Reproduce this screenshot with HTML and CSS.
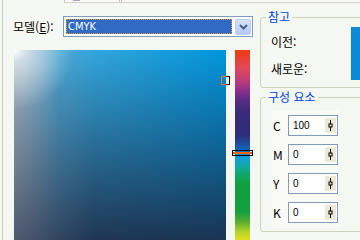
FILE: index.html
```html
<!DOCTYPE html>
<html lang="ko">
<head>
<meta charset="utf-8">
<link rel="stylesheet" href="styles.css">
</head>
<body>
<div class="window">
  <div class="vline"></div>
  <div class="content">
    <div class="tabs">
      <div class="tab tab-a"><span class="tab-mark"></span></div>
      <div class="tab tab-b"></div>
    </div>
    <div class="main">
      <div class="left">
        <div class="model-row">
          <span class="model-label">모델(<u>E</u>):</span>
          <div class="combo">
            <span class="combo-value">CMYK</span>
            <span class="combo-btn">
              <svg width="9" height="6" viewBox="0 0 9 6"><path d="M1 1 L4.5 4.5 L8 1" fill="none" stroke="#4d6185" stroke-width="2"/></svg>
            </span>
          </div>
        </div>
        <div class="picker-row">
          <div class="field"><span class="field-marker"></span></div>
          <div class="hue"><span class="hue-marker"></span></div>
        </div>
      </div>
      <div class="side">
        <fieldset class="group group-ref">
          <legend>참고</legend>
          <div class="ref-body">
            <div class="ref-labels">
              <span class="ref-label first">이전:</span>
              <span class="ref-label second">새로운:</span>
            </div>
            <div class="swatch"></div>
          </div>
        </fieldset>
        <fieldset class="group group-comp">
          <legend>구성 요소</legend>
          <div class="comp-panel">
            <div class="comp-row"><span class="comp-label">C</span><div class="num"><span class="num-val">100</span><span class="spin"><svg width="11" height="15" viewBox="0 0 11 15"><path d="M5.5 2 V13" stroke="#000" stroke-width="1"/><rect x="4" y="6" width="3" height="3" fill="#ece9d8" stroke="#000" stroke-width="1"/></svg></span></div></div>
            <div class="comp-row"><span class="comp-label">M</span><div class="num"><span class="num-val">0</span><span class="spin"><svg width="11" height="15" viewBox="0 0 11 15"><path d="M5.5 2 V13" stroke="#000" stroke-width="1"/><rect x="4" y="6" width="3" height="3" fill="#ece9d8" stroke="#000" stroke-width="1"/></svg></span></div></div>
            <div class="comp-row"><span class="comp-label">Y</span><div class="num"><span class="num-val">0</span><span class="spin"><svg width="11" height="15" viewBox="0 0 11 15"><path d="M5.5 2 V13" stroke="#000" stroke-width="1"/><rect x="4" y="6" width="3" height="3" fill="#ece9d8" stroke="#000" stroke-width="1"/></svg></span></div></div>
            <div class="comp-row"><span class="comp-label">K</span><div class="num"><span class="num-val">0</span><span class="spin"><svg width="11" height="15" viewBox="0 0 11 15"><path d="M5.5 2 V13" stroke="#000" stroke-width="1"/><rect x="4" y="6" width="3" height="3" fill="#ece9d8" stroke="#000" stroke-width="1"/></svg></span></div></div>
          </div>
        </fieldset>
      </div>
    </div>
  </div>
</div>
</body>
</html>
```
FILE: styles.css
```css
html, body {
  margin: 0;
  padding: 0;
  background: #f5f7f2;
}
body {
  width: 360px;
  height: 240px;
  overflow: hidden;
  font-family: "Noto Sans CJK KR", "Noto Sans", sans-serif;
  font-size: 12px;
  color: #000;
}
.window {
  display: flex;
  height: 240px;
  padding-left: 2px;
  overflow: hidden;
}
.vline {
  width: 1px;
  flex-shrink: 0;
  background: #c9c8b8;
}
.content {
  flex: 1;
  display: flex;
  flex-direction: column;
  min-width: 0;
}
.tabs {
  display: flex;
  height: 2px;
  margin-left: 61px;
  border-bottom: 1px solid #d0d0c6;
  flex-shrink: 0;
}
.tab {
  box-sizing: border-box;
  height: 2px;
  border-left: 1px solid #c4c4ba;
}
.tab-a {
  width: 56px;
  border-right: 1px solid #c4c4ba;
  background: #fbfbf8;
  padding-left: 8px;
}
.tab-b {
  flex: 1;
  margin-left: 1px;
  background: #f8f8f4;
}
.tab-mark {
  display: block;
  width: 7px;
  height: 1px;
  background: #a89cc8;
}
.main {
  display: flex;
  flex: 1;
}
.left {
  width: 257px;
  flex-shrink: 0;
  display: flex;
  flex-direction: column;
}
.model-row {
  display: flex;
  align-items: center;
  margin-top: 13px;
  padding-left: 10px;
  height: 21px;
}
.model-label {
  width: 50px;
  line-height: 14px;
}
.model-label u {
  text-decoration: underline;
  text-underline-offset: 1px;
}
.combo {
  box-sizing: border-box;
  width: 190px;
  height: 21px;
  border: 1px solid #7f9db9;
  background: #fff;
  display: flex;
  align-items: center;
  padding: 0 1px 0 2px;
}
.combo-value {
  box-sizing: border-box;
  flex: 1;
  height: 15px;
  background: #316ac5;
  border: 1px dotted #d89a3a;
  color: #fff;
  font-family: "DejaVu Sans Condensed", "DejaVu Sans", sans-serif;
  font-size: 11px;
  line-height: 13px;
  padding-left: 1px;
}
.combo-btn {
  box-sizing: border-box;
  width: 16px;
  height: 16px;
  margin-left: 3px;
  border: 1px solid #b9cdf5;
  border-radius: 2px;
  background: linear-gradient(#d4e2fc, #b6caf6);
  display: flex;
  align-items: center;
  justify-content: center;
}
.picker-row {
  display: flex;
  margin-top: 13px;
  padding-left: 11px;
}
.field {
  position: relative;
  width: 212px;
  height: 200px;
  flex-shrink: 0;
  background:
    radial-gradient(circle at 0 0, #fff 0, rgba(255,255,255,0.55) 12px, rgba(255,255,255,0) 60px),
    linear-gradient(to right, rgba(140,150,165,0.35) 0, rgba(140,150,165,0) 80px),
    linear-gradient(to bottom, rgba(28,38,64,0) 0, rgba(28,38,64,0.42) 90px, rgba(28,38,64,0.88) 190px),
    linear-gradient(to right, #b8ccd8 0, #40aadc 45px, #0096dc 212px);
}
.field-marker {
  position: absolute;
  left: 207px;
  top: 26px;
  width: 9px;
  height: 9px;
  box-sizing: border-box;
  border: 1px solid;
  border-image: linear-gradient(to right, #f07828 55%, #000 55%) 1;
}
.hue {
  position: relative;
  width: 15px;
  height: 200px;
  margin-left: 9px;
  flex-shrink: 0;
  background: linear-gradient(to bottom,
    #e8400c 0px,
    #e84030 8px,
    #e04858 18px,
    #c03c78 30px,
    #90308a 40px,
    #5a2c84 50px,
    #3a2a7c 62px,
    #2e2c78 85px,
    #1e4a9c 93px,
    #1266b6 100px,
    #10a0d8 108px,
    #12a8a8 116px,
    #10a868 124px,
    #10a040 134px,
    #14a03c 162px,
    #58b030 172px,
    #b8d428 182px,
    #e0e020 190px,
    #e8e020 200px);
}
.hue-marker {
  position: absolute;
  left: -3px;
  top: 100px;
  width: 21px;
  height: 6px;
  box-sizing: border-box;
  border: 1px solid #000;
  background: linear-gradient(to bottom, transparent 0 1px, #f06418 1px 3px, transparent 3px);
}
.side {
  width: 120px;
  flex-shrink: 0;
  display: flex;
  flex-direction: column;
}
.group {
  box-sizing: border-box;
  width: 112px;
  margin: 0;
  padding: 0 0 0 5px;
  border: 1px solid #d0d0bf;
  border-radius: 3px;
  min-width: 0;
}
.group legend {
  padding: 0 2px;
  color: #0046d5;
  font-size: 12px;
  line-height: 14px;
}
.group-ref {
  margin-top: 7px;
  height: 78px;
}
.group-comp {
  margin-top: 2px;
  height: 142px;
}
.ref-body {
  display: flex;
}
.ref-labels {
  width: 80px;
  padding-left: 5px;
  display: flex;
  flex-direction: column;
}
.ref-label {
  line-height: 14px;
}
.ref-label.first {
  margin-top: 11px;
}
.ref-label.second {
  margin-top: 13px;
}
.swatch {
  width: 20px;
  height: 53px;
  margin-top: 3px;
  background: #0b8ad6;
  border-left: 1px solid #e8f0f8;
}
.comp-panel {
  width: 67px;
  margin: 6px 0 0 6px;
  padding: 5px 0 4px;
  background: #fafaf7;
  display: flex;
  flex-direction: column;
  gap: 8px;
}
.comp-row {
  display: flex;
  align-items: center;
  height: 21px;
}
.comp-label {
  width: 15px;
  padding-left: 1px;
  font-size: 12px;
  line-height: 14px;
}
.num {
  box-sizing: border-box;
  width: 50px;
  height: 21px;
  border: 1px solid #7f9db9;
  background: #fff;
  display: flex;
  align-items: center;
}
.num-val {
  flex: 1;
  padding-left: 4px;
  font-family: "Liberation Sans", Arial, sans-serif;
  font-size: 10px;
  line-height: 12px;
}
.spin {
  width: 11px;
  height: 15px;
  margin-right: 1px;
  background: #ece9d8;
  display: flex;
}
```
